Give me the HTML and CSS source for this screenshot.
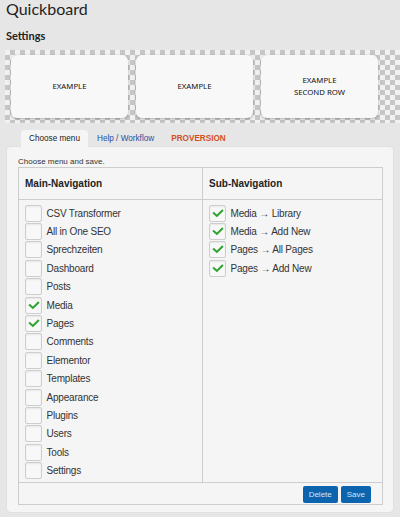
FILE: index.html
```html
<!DOCTYPE html>
<html lang="en">
<head>
<meta charset="utf-8">
<title>Quickboard</title>
<link rel="stylesheet" href="styles.css">
</head>
<body class="page">
  <h1 class="title">Quickboard</h1>
  <h2 class="subtitle">Settings</h2>

  <div class="checker">
    <div class="card">EXAMPLE</div>
    <div class="card">EXAMPLE</div>
    <div class="card">EXAMPLE<br>SECOND ROW</div>
  </div>

  <div class="tabs">
    <span class="tab tab-active">Choose menu</span>
    <span class="tab tab-link">Help / Workflow</span>
    <span class="tab tab-pro">PROVERSION</span>
  </div>

  <div class="panel">
    <p class="hint">Choose menu and save.</p>
    <div class="table">
      <div class="thead">
        <div class="th th-main">Main-Navigation</div>
        <div class="th th-sub">Sub-Navigation</div>
      </div>
      <div class="tbody">
        <div class="col col-main">
          <div class="row"><span class="box"></span><span class="label">CSV Transformer</span></div>
          <div class="row"><span class="box"></span><span class="label">All in One SEO</span></div>
          <div class="row"><span class="box"></span><span class="label">Sprechzeiten</span></div>
          <div class="row"><span class="box"></span><span class="label">Dashboard</span></div>
          <div class="row"><span class="box"></span><span class="label">Posts</span></div>
          <div class="row"><span class="box"><svg class="tick" viewBox="0 0 17 17"><path d="M4.3 8.2 L7.8 11.2 L13.8 5.3"/></svg></span><span class="label">Media</span></div>
          <div class="row"><span class="box"><svg class="tick" viewBox="0 0 17 17"><path d="M4.3 8.2 L7.8 11.2 L13.8 5.3"/></svg></span><span class="label">Pages</span></div>
          <div class="row"><span class="box"></span><span class="label">Comments</span></div>
          <div class="row"><span class="box"></span><span class="label">Elementor</span></div>
          <div class="row"><span class="box"></span><span class="label">Templates</span></div>
          <div class="row"><span class="box"></span><span class="label">Appearance</span></div>
          <div class="row"><span class="box"></span><span class="label">Plugins</span></div>
          <div class="row"><span class="box"></span><span class="label">Users</span></div>
          <div class="row"><span class="box"></span><span class="label">Tools</span></div>
          <div class="row"><span class="box"></span><span class="label">Settings</span></div>
        </div>
        <div class="col col-sub">
          <div class="row"><span class="box"><svg class="tick" viewBox="0 0 17 17"><path d="M4.3 8.2 L7.8 11.2 L13.8 5.3"/></svg></span><span class="label">Media → Library</span></div>
          <div class="row"><span class="box"><svg class="tick" viewBox="0 0 17 17"><path d="M4.3 8.2 L7.8 11.2 L13.8 5.3"/></svg></span><span class="label">Media → Add New</span></div>
          <div class="row"><span class="box"><svg class="tick" viewBox="0 0 17 17"><path d="M4.3 8.2 L7.8 11.2 L13.8 5.3"/></svg></span><span class="label">Pages → All Pages</span></div>
          <div class="row"><span class="box"><svg class="tick" viewBox="0 0 17 17"><path d="M4.3 8.2 L7.8 11.2 L13.8 5.3"/></svg></span><span class="label">Pages → Add New</span></div>
        </div>
      </div>
      <div class="tfoot">
        <button class="btn" type="button">Delete</button>
        <button class="btn" type="button">Save</button>
      </div>
    </div>
  </div>
</body>
</html>
```

FILE: styles.css
```css
* { box-sizing: border-box; }

html, body { margin: 0; padding: 0; }

.page {
  background: #e6e6e6;
  width: 400px;
  height: 517px;
  overflow: hidden;
  font-family: "Liberation Sans", Arial, sans-serif;
  color: #333;
}

.title {
  margin: 0;
  padding: 0 0 0 6px;
  font-family: Lato, "Liberation Sans", sans-serif;
  font-weight: 400;
  font-size: 16px;
  line-height: 17px;
  color: #1e1e1e;
}

.subtitle {
  margin: 12px 0 0 0;
  padding-left: 6px;
  font-family: Lato, "Liberation Sans", sans-serif;
  font-weight: 700;
  font-size: 11px;
  line-height: 14px;
  color: #222;
}

.checker {
  margin: 7px 0 0 5px;
  height: 73px;
  padding: 5px 0 0 6px;
  display: flex;
  gap: 8px;
  background-color: #f1f1f1;
  background-image: conic-gradient(#c6c6c6 25%, transparent 0 50%, #c6c6c6 0 75%, transparent 0);
  background-size: 10px 10px;
}

.card {
  width: 117px;
  height: 63px;
  flex: none;
  background: #f8f8f8;
  border-radius: 6px;
  box-shadow: 0 1px 3px rgba(0, 0, 0, 0.28);
  display: flex;
  align-items: center;
  justify-content: center;
  text-align: center;
  font-family: "Noto Sans", sans-serif;
  font-size: 7.8px;
  line-height: 11.5px;
  color: #111;
}

.tabs {
  display: flex;
  gap: 1px;
  margin: 7px 0 0 21px;
  height: 17px;
}

.tab {
  padding: 0 8px;
  font-size: 8.2px;
  line-height: 17px;
  white-space: nowrap;
}

.tab-active {
  background: #f5f5f5;
  border-radius: 4px 4px 0 0;
  color: #222;
}

.tab-link { color: #1f4f9e; }

.tab-pro {
  color: #d4501e;
  font-weight: 700;
  padding-left: 8px;
}

.panel {
  margin: 0 7px 0 7px;
  background: #f5f5f5;
  border-radius: 4px;
  padding: 10px 10px 7px 11px;
  box-shadow: 0 0 0 1px #e0e0e0;
}

.hint {
  margin: 0;
  font-size: 8px;
  line-height: 10px;
  color: #333;
}

.table {
  border: 1px solid #cdcdcd;
}

.thead {
  display: flex;
  height: 32px;
  border-bottom: 1px solid #cdcdcd;
}

.th {
  font-weight: 700;
  font-size: 10px;
  line-height: 31px;
  padding-left: 6px;
  color: #222;
}

.th-main {
  width: 184px;
  border-right: 1px solid #cdcdcd;
}

.th-sub { flex: 1; }

.tbody {
  display: flex;
  height: 283px;
  border-bottom: 1px solid #cdcdcd;
}

.col {
  padding: 4px 0 0 6px;
}

.col-main {
  width: 184px;
  border-right: 1px solid #cdcdcd;
}

.col-sub { flex: 1; }

.row {
  display: flex;
  align-items: center;
  height: 18.4px;
}

.box {
  width: 17px;
  height: 17px;
  flex: none;
  border: 1px solid #cecece;
  border-radius: 2px;
  background: #f8f8f8;
  box-shadow: inset 0 1px 2px rgba(0, 0, 0, 0.07);
  display: flex;
}

.tick {
  width: 15px;
  height: 15px;
  margin: 0;
}

.tick path {
  fill: none;
  stroke: #2da42d;
  stroke-width: 2.3;
  stroke-linecap: square;
  stroke-linejoin: miter;
}

.label {
  margin-left: 4.5px;
  font-size: 10px;
  letter-spacing: -0.2px;
  color: #333;
  white-space: nowrap;
}

.tfoot {
  display: flex;
  justify-content: flex-end;
  gap: 3px;
  height: 21px;
  padding: 3px 11px 0 0;
}

.btn {
  height: 17px;
  padding: 0 6px;
  border: 0;
  border-radius: 2px;
  background: #0b64ad;
  color: #d6e6f5;
  font-family: "Liberation Sans", Arial, sans-serif;
  font-size: 8px;
  line-height: 17px;
}
```
